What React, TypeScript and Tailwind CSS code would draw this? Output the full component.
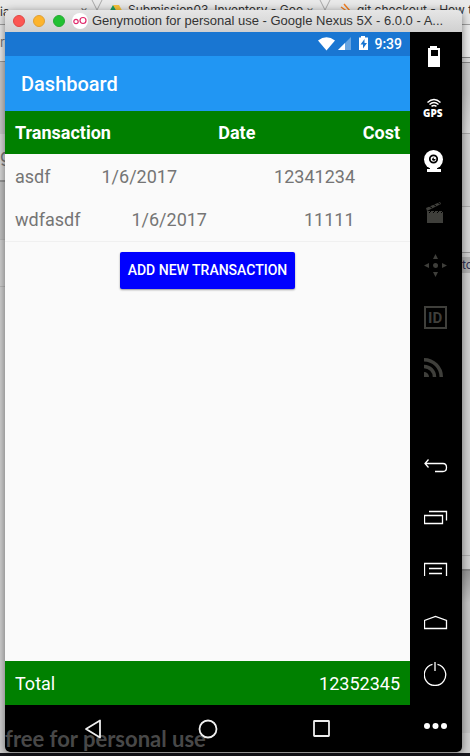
import type { ReactNode } from "react";

type Transaction = { name: string; date: string; cost: string };

const transactions: Transaction[] = [
  { name: "asdf", date: "1/6/2017", cost: "12341234" },
  { name: "wdfasdf", date: "1/6/2017", cost: "11111" },
];

const deviceTools: { label: string; dim?: boolean; icon: ReactNode }[] = [
  {
    label: "Battery",
    icon: <path fillRule="evenodd" fill="currentColor" d="M6 0h7v2h3v19H4V2h2zM7 4v6h7V4z" />,
  },
  {
    label: "GPS",
    icon: (
      <>
        <path
          fill="none"
          stroke="currentColor"
          strokeWidth="1.5"
          d="M3.5 4.500Q10 -1.500 16.500 4.500M5.500 6.500Q10 2.500 14.500 6.500M7.500 8.300Q10 6.500 12.500 8.300"
        />
        <text x="-1" y="19" fill="currentColor" className="font-['Open_Sans'] text-[10px] font-extrabold">
          GPS
        </text>
      </>
    ),
  },
  {
    label: "Camera",
    icon: (
      <>
        <circle cx="9.500" cy="9.500" r="9.500" fill="currentColor" />
        <path fill="currentColor" d="M6 17h7v2h4v3H3v-3h3z" />
        <circle cx="9.500" cy="9" r="3.700" fill="none" stroke="#000" strokeWidth="1.800" />
        <circle cx="9.800" cy="9.200" r="1.600" fill="#000" />
        <circle cx="10.600" cy="8.200" r=".900" fill="currentColor" />
      </>
    ),
  },
  {
    label: "Screencast",
    dim: true,
    icon: (
      <>
        <path fill="currentColor" d="M3 12h16v9H3zM3 9h16v3H3zM2 6 16 0l1 2L3 9z" />
        <path stroke="#000" strokeWidth="1" d="m5 11 2-2m2 2 2-2m2 2 2-2m2 2 2-2M5 4l3 2m1-4 3 2m1-4 3 2" />
      </>
    ),
  },
  {
    label: "Remote control",
    dim: true,
    icon: (
      <path
        fill="currentColor"
        d="M11.500 0 14 5H9zM11.500 23 9 18h5zM0 11.500 5 9v5zM23 11.500 18 14V9zM11.500 9a2.500 2.500 0 1 1 0 5 2.500 2.500 0 0 1 0-5z"
      />
    ),
  },
  {
    label: "Identifiers",
    dim: true,
    icon: (
      <>
        <rect x="1" y="1" width="21" height="21" fill="none" stroke="currentColor" strokeWidth="2" />
        <text x="4" y="17" fill="currentColor" className="font-['Roboto'] text-[15px] font-bold">
          ID
        </text>
      </>
    ),
  },
  {
    label: "Network",
    dim: true,
    icon: (
      <>
        <path
          fill="none"
          stroke="currentColor"
          strokeWidth="3.500"
          d="M0 1.750A17.250 17.250 0 0 1 17.250 19M0 8.500A10.500 10.500 0 0 1 10.500 19"
        />
        <path fill="currentColor" d="M0 14a5 5 0 0 1 5 5H0z" />
      </>
    ),
  },
];

const deviceKeys: { label: string; icon: ReactNode }[] = [
  { label: "Back", icon: <path d="M4.500 5.500 1 9.500l3.500 4M1 9.500h18q3.500 0 3.500 4t-3.500 4h-8" /> },
  { label: "Recent apps", icon: <path d="M.500 9.500h18v8H.500zM5 5.500h17.500v9" /> },
  { label: "Menu", icon: <path d="M.500 18V5.500h22V18M5 10.500h13M5 15.500h13" /> },
  { label: "Home", icon: <path d="M.500 18.500v-8l11-4 11 4v8z" /> },
  { label: "Power", icon: <path d="M8.500 2.300a10.700 10.700 0 1 0 5 0M11 0v9" /> },
  {
    label: "More",
    icon: (
      <g fill="currentColor" stroke="none">
        <circle cx="3" cy="12" r="3" />
        <circle cx="11.500" cy="12" r="3" />
        <circle cx="20" cy="12" r="3" />
      </g>
    ),
  },
];

function DesktopBackdrop() {
  return (
    <div aria-hidden="true" className="absolute inset-0 overflow-hidden bg-[#d2d2d2] font-['Inter',sans-serif]">
      <div className="flex h-[25px] items-start border-b border-[#a0a0a0] bg-[#e9e9e9] text-[12px] leading-5 whitespace-nowrap text-[#333]">
        <span className="w-20 shrink-0 pt-0.5">ia</span>
        <span className="w-[11px] shrink-0 text-[#666]">×</span>
        <svg className="h-4 w-4 shrink-0" viewBox="0 0 16 16" fill="none" stroke="#a8a8a8">
          <path d="m1 0 5 10L11 0" />
        </svg>
        <svg className="h-5 w-[21px] shrink-0" viewBox="0 0 21 20">
          <path fill="#1e9e63" d="m6 5-5 9 3 5 6-9z" />
          <path fill="#f9c33b" d="M6 5h6l5 9h-6z" />
        </svg>
        <span className="w-[178px] shrink-0">Submission03_Inventory - Goo</span>
        <span className="w-[13px] shrink-0 text-[#666]">×</span>
        <svg className="h-4 w-5 shrink-0" viewBox="0 0 20 16" fill="none" stroke="#a8a8a8">
          <path d="m1 0 5 10L11 0" />
        </svg>
        <svg className="h-4 w-[18px] shrink-0" viewBox="0 0 18 16" fill="none" stroke="#f48024" strokeWidth="1.500">
          <path d="m2 7 7 5M5 4l6 7" />
        </svg>
        <span>git checkout - How to</span>
      </div>
      <div className="flex justify-between">
        <div className="w-5 text-[13px] text-[#777]">
          <div className="h-[37px] border-b border-[#999] bg-[#ececec] pt-2">rs</div>
          <div className="h-[72px] bg-[#c9c9c9]" />
          <div className="h-12 border-b-2 border-[#999] bg-[#dadada] pt-2 text-lg">g</div>
          <div className="h-[57px] bg-[#c4c4c4]" />
          <div className="h-12 border-y border-[#bbb]" />
        </div>
        <div className="w-2 text-xs">
          <div className="h-[33px] border-b border-[#888] bg-[#eee]" />
          <div className="h-[5px] border-b border-[#888] bg-[#ddd]" />
          <div className="h-[30px] bg-[#c8c8c8]" />
          <div className="h-[41px] border-b border-[#aaa] bg-linear-to-b from-[#c8c8c8] to-[#ddd]" />
          <div className="h-[73px] border-b border-[#b0b0b0]" />
          <div className="h-[46px] border-b border-[#999] bg-[#d8d8d8]" />
          <div className="mt-1 h-4 bg-[#b3b3b3] leading-4 text-[#335]">to</div>
          <div className="h-[283px] border-b border-[#b0b0b0]" />
          <div className="h-[15px] border-b-2 border-[#888]" />
          <div className="h-8 bg-linear-to-b from-[#999] to-[#c6c6c6]" />
          <div className="h-[130px] bg-[#c6c6c6]" />
        </div>
      </div>
      <div className="absolute inset-x-0 bottom-0 h-[3px] bg-[#15151c]" />
    </div>
  );
}

function TitleBar() {
  return (
    <header className="flex h-[22px] shrink-0 items-center bg-linear-to-b from-[#e6e6e6] to-[#d0d0d0] pl-2 font-['Liberation_Sans',sans-serif] text-[#333]">
      <div className="flex gap-2">
        <button aria-label="Close" className="size-3 rounded-full border border-[#df4744] bg-[#fc5753]" />
        <button aria-label="Minimize" className="size-3 rounded-full border border-[#de9f34] bg-[#fdb42c]" />
        <button aria-label="Zoom" className="size-3 rounded-full border border-[#27aa35] bg-[#22c132]" />
      </div>
      <svg className="ml-[7px] size-4 shrink-0" viewBox="0 0 16 16" aria-hidden="true">
        <circle cx="8" cy="8" r="8" fill="#fff" />
        <g fill="none" stroke="#e0286b" strokeWidth="1.200">
          <circle cx="4" cy="8.500" r="2.200" />
          <circle cx="11" cy="7.500" r="3" />
        </g>
      </svg>
      <h1 className="ml-1 text-[13px] whitespace-nowrap">Genymotion for personal use - Google Nexus 5X - 6.0.0 - A...</h1>
    </header>
  );
}

function StatusBar() {
  return (
    <div className="flex h-6 shrink-0 items-center justify-end bg-[#1976d2] pr-2 text-white">
      <svg className="h-4 w-[52px]" viewBox="0 0 52 16" fill="currentColor" aria-hidden="true">
        <path d="M0 4.500Q8.500-2 17 4.500L8.500 14.500z" />
        <path opacity=".35" d="M33 1v13H20z" />
        <path d="M27 7v7h-7z" />
        <path fillRule="evenodd" d="M43 0h4v1.500h3V14h-9V1.500h2zM46.500 3 42.500 8.500H45V12.500L49 7h-2.500z" />
      </svg>
      <span className="ml-1 text-[14px] font-medium">9:39</span>
    </div>
  );
}

function TransactionTable() {
  return (
    <table className="block text-[18px] leading-6">
      <thead className="block bg-[#008000] text-white">
        <tr className="flex h-[43px] items-center justify-between px-2.5">
          <th className="font-bold">Transaction</th>
          <th className="font-bold">Date</th>
          <th className="font-bold">Cost</th>
        </tr>
      </thead>
      <tbody className="block border-b border-[#f0f0f0] pt-px text-[#757575]">
        {transactions.map((item) => (
          <tr key={item.name} className="flex h-[43px] items-center px-2.5">
            <td>{item.name}</td>
            <td className="ml-[51px]">{item.date}</td>
            <td className="ml-[97px]">{item.cost}</td>
          </tr>
        ))}
      </tbody>
    </table>
  );
}

function NavigationBar() {
  return (
    <nav className="relative flex h-[47px] shrink-0 items-center justify-center gap-[90px] bg-black text-[#eee]">
      <span className="absolute bottom-0 left-0 font-['Lato',sans-serif] text-[22px] leading-[26px] font-bold whitespace-nowrap text-[#484848]">
        free for personal use
      </span>
      <button aria-label="Back" className="relative">
        <svg className="size-6" viewBox="0 0 24 24" fill="none" stroke="currentColor" strokeWidth="1.800" strokeLinejoin="round">
          <path d="M18 3.500v17L4 12z" />
        </svg>
      </button>
      <button aria-label="Home" className="relative">
        <svg className="size-6" viewBox="0 0 24 24" fill="none" stroke="currentColor" strokeWidth="1.800">
          <circle cx="12" cy="12" r="8.500" />
        </svg>
      </button>
      <button aria-label="Overview" className="relative">
        <svg className="size-6" viewBox="0 0 24 24" fill="none" stroke="currentColor" strokeWidth="1.800">
          <rect x="4" y="4" width="15" height="15" rx=".500" />
        </svg>
      </button>
    </nav>
  );
}

function DeviceSidebar() {
  return (
    <aside className="flex w-[52px] shrink-0 flex-col justify-between bg-black">
      <div className="flex flex-col">
        {deviceTools.map((tool) => (
          <button
            key={tool.label}
            aria-label={tool.label}
            className={`flex h-[52px] items-center pl-3.5 ${tool.dim ? "text-[#3f3f3b]" : "text-white"}`}
          >
            <svg className="size-6 overflow-visible" viewBox="0 0 24 24">
              {tool.icon}
            </svg>
          </button>
        ))}
      </div>
      <div className="flex flex-col">
        {deviceKeys.map((key) => (
          <button key={key.label} aria-label={key.label} className="flex h-[52px] items-center pl-3.5 text-white">
            <svg className="size-6" viewBox="0 0 24 24" fill="none" stroke="currentColor" strokeWidth="1.300">
              {key.icon}
            </svg>
          </button>
        ))}
      </div>
    </aside>
  );
}

export default function App() {
  return (
    <div className="relative flex h-screen min-h-[720px] flex-col pt-2.5 pr-2 pb-1 pl-[5px] font-['Roboto',sans-serif]">
      <DesktopBackdrop />
      <div className="relative flex flex-1 flex-col overflow-hidden rounded-[5px] shadow-[0_2px_10px_rgba(0,0,0,0.5)]">
        <TitleBar />
        <div className="flex flex-1">
          <main className="flex min-w-0 flex-1 flex-col bg-[#fafafa]">
            <StatusBar />
            <div className="flex h-[55px] shrink-0 items-center bg-[#2196f3] px-4 text-white">
              <h2 className="text-[20px] font-medium">Dashboard</h2>
            </div>
            <TransactionTable />
            <div className="flex flex-1 items-start justify-center pt-2.5">
              <button className="h-[37px] rounded-[2px] bg-[#0000ff] px-2 text-[14px] font-medium text-white shadow-[0_1px_2px_rgba(0,0,0,0.4)]">
                ADD NEW TRANSACTION
              </button>
            </div>
            <div className="flex h-11 shrink-0 items-center justify-between bg-[#008000] px-2.5 text-[18px] text-white">
              <span>Total</span>
              <span>12352345</span>
            </div>
            <NavigationBar />
          </main>
          <DeviceSidebar />
        </div>
      </div>
    </div>
  );
}
